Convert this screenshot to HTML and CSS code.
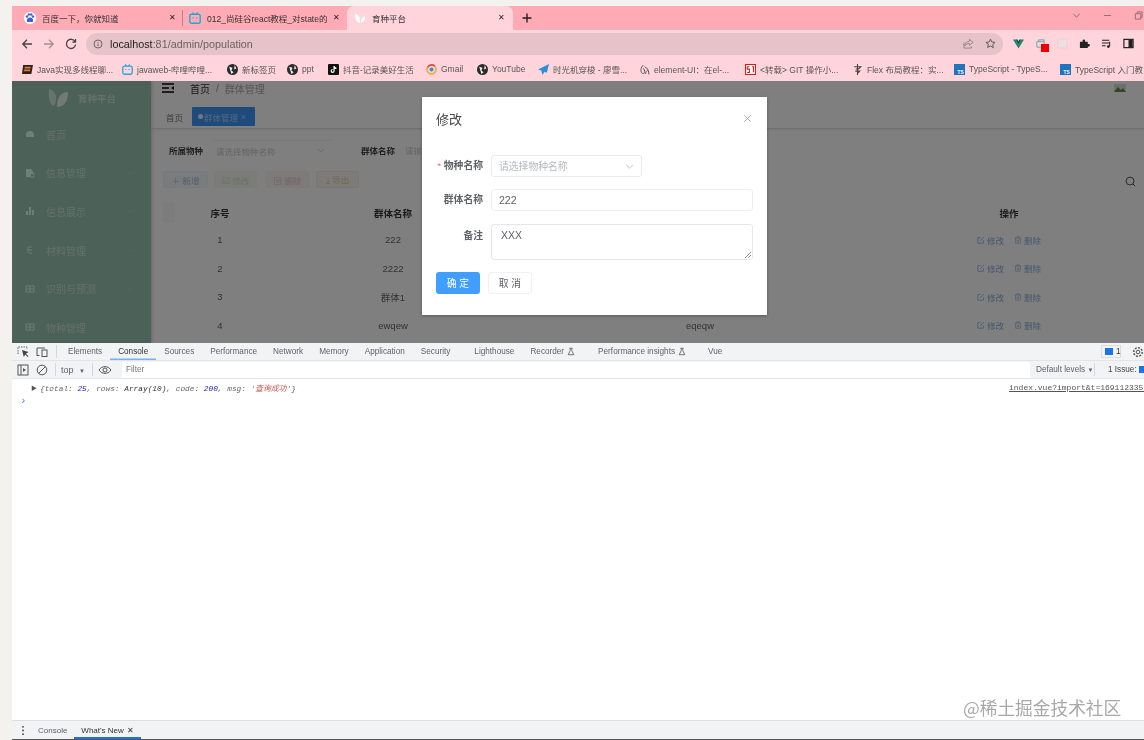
FILE: index.html
```html
<!DOCTYPE html>
<html lang="zh">
<head>
<meta charset="utf-8">
<title>育种平台</title>
<link rel="stylesheet" href="styles.css">
</head>
<body>
<div class="window">
  <div class="tabstrip">
    <div class="tab tab-a">
      <svg class="fav" viewBox="0 0 12 12"><circle cx="6" cy="6" r="6" fill="#fff"/><path d="M6 5.500c-2 0-3.200 1.800-3.200 3.200C2.800 10 4 10.300 6 9.800c2 .5 3.200.2 3.200-1.100C9.200 7.300 8 5.500 6 5.500z" fill="#3a5fd8"/><circle cx="3" cy="4.500" r="1.200" fill="#3a5fd8"/><circle cx="9" cy="4.500" r="1.200" fill="#3a5fd8"/><circle cx="4.800" cy="2.500" r="1.200" fill="#3a5fd8"/><circle cx="7.200" cy="2.500" r="1.200" fill="#3a5fd8"/></svg>
      <span class="tab-title">百度一下，你就知道</span>
      <span class="tab-x">✕</span>
    </div>
    <div class="tab tab-b">
      <svg class="fav" viewBox="0 0 12 12"><rect x=".8" y="2.300" width="10.400" height="9" rx="1.800" fill="none" stroke="#23a6d9" stroke-width="1.400"/><path d="M3.500.5l1.500 1.800M8.500.5L7 2.300M3.500 6h1.500M7 6h1.500" stroke="#23a6d9" stroke-width="1.200"/></svg>
      <span class="tab-title">012_尚硅谷react教程_对state的</span>
      <span class="tab-x">✕</span>
    </div>
    <div class="tab tab-c">
      <svg class="fav" viewBox="0 0 12 12"><path d="M1 2c4 0 5 3 5 9C2 10 1 6 1 2zM7 11c0-4 1-6 4-7 0 4-1 6-4 7z" fill="#fff"/></svg>
      <span class="tab-title">育种平台</span>
      <span class="tab-x">✕</span>
    </div>
    <svg class="newtab" viewBox="0 0 10 10"><path d="M5 .5v9M.5 5h9" stroke="#222" stroke-width="1.400"/></svg>
    <div class="winctl">
      <svg viewBox="0 0 10 10"><path d="M1.500 3l3.500 4 3.500-4" fill="none" stroke="#8a6a70"/></svg>
      <svg viewBox="0 0 10 10"><path d="M1 5h8" stroke="#8a6a70"/></svg>
      <svg viewBox="0 0 10 10"><path d="M1.500 3h6v6h-6zM3.500 3V1h5.500v6H7.500" fill="none" stroke="#8a6a70"/></svg>
    </div>
  </div>

  <div class="toolbar">
    <svg class="nav" viewBox="0 0 12 12"><path d="M11 6H2M6 1.800L1.800 6 6 10.200" fill="none" stroke="#444" stroke-width="1.300"/></svg>
    <svg class="nav" viewBox="0 0 12 12"><path d="M1 6h9M6 1.800L10.200 6 6 10.200" fill="none" stroke="#a58f93" stroke-width="1.300"/></svg>
    <svg class="nav" viewBox="0 0 12 12"><path d="M10 3.500A4.600 4.600 0 1 0 10.600 6.500M10.500 1v3.200H7.300" fill="none" stroke="#444" stroke-width="1.300"/></svg>
    <div class="omnibox">
      <svg class="omni-info" viewBox="0 0 12 12"><circle cx="6" cy="6" r="4.800" fill="none" stroke="#555"/><path d="M6 5.500v3M6 3.500v1" stroke="#555"/></svg>
      <span class="url"><b>localhost</b>:81/admin/population</span>
      <svg class="omni-act" viewBox="0 0 12 12"><path d="M7 1.500l4 3.200-4 3.200V6C4.500 6 3 7 2 8.500 2.300 5.500 4 3.800 7 3.500zM1 5v6h8V9" fill="none" stroke="#8f7a7e" stroke-width=".9"/></svg>
      <svg class="omni-act" viewBox="0 0 12 12"><path d="M6 1.200l1.500 3.200 3.500.4-2.600 2.400.7 3.500L6 8.600l-3.100 1.700.7-3.500L1 4.800l3.500-.4z" fill="none" stroke="#555" stroke-width="1"/></svg>
    </div>
    <div class="ext">
      <svg viewBox="0 0 12 12"><path d="M0 1.500h4l2 3.500 2-3.500h4L6 11.500z" fill="#1d8a6a"/><path d="M3.500 1.500h1.500L6 3.500l1-2h1.500L6 6.500z" fill="#25475f"/></svg>
      <span class="ext-badge-wrap"><svg viewBox="0 0 12 12"><path d="M2 4h8v6H2zM4 4V2h6v2" fill="none" stroke="#5aa8b0"/></svg><i class="ext-badge"></i></span>
      <svg viewBox="0 0 12 12"><rect x="1" y="1" width="10" height="10" rx="1" fill="#f0dfe2" stroke="#e7d0d4"/></svg>
      <svg viewBox="0 0 12 12"><path d="M1 4h3V2.800a1.300 1.300 0 0 1 2.600 0V4h3v2.600h1a1.300 1.300 0 0 1 0 2.600h-1V11H1z" fill="#222"/></svg>
      <svg viewBox="0 0 12 12"><path d="M1 2.500h8M1 5.500h8M1 8.500h4M9.500 4v5" fill="none" stroke="#222" stroke-width="1.100"/><circle cx="8" cy="9.300" r="1.500" fill="#222"/></svg>
      <svg viewBox="0 0 12 12"><rect x="1" y="1.500" width="10" height="9" fill="none" stroke="#222" stroke-width="1.300"/><rect x="6" y="2" width="4.500" height="8" fill="#222"/></svg>
    </div>
  </div>

  <div class="bookmarks">
    <span class="bm bm1"><svg viewBox="0 0 10 10"><path d="M1 1h9L8.500 9H0z" fill="#2b2320"/><path d="M2.500 2.500h5.500l-.3 1.500H2.200zM2 5h5.500l-.3 1.500H1.700z" fill="#e8792b"/></svg><span>Java实现多线程聊...</span></span>
    <span class="bm bm2"><svg viewBox="0 0 10 10"><rect x=".7" y="2" width="8.600" height="7.300" rx="1.500" fill="none" stroke="#23a6d9" stroke-width="1.200"/><path d="M3 .3l1.200 1.700M7 .3L5.800 2M3 5h1M6 5h1" stroke="#23a6d9"/></svg><span>javaweb-哔哩哔哩...</span></span>
    <span class="bm bm3"><svg class="globe" viewBox="0 0 10 10"><circle cx="5" cy="5" r="5" fill="#2a2a2a"/><path d="M2 2.500l3 1-1 2.500 2 1.500-2 1.500M7 1l1.500 3L6.500 5z" fill="#eee"/></svg><span>新标签页</span></span>
    <span class="bm bm4"><svg class="globe" viewBox="0 0 10 10"><circle cx="5" cy="5" r="5" fill="#2a2a2a"/><path d="M2 2.500l3 1-1 2.500 2 1.500-2 1.500M7 1l1.500 3L6.500 5z" fill="#eee"/></svg><span>ppt</span></span>
    <span class="bm bm5"><svg viewBox="0 0 10 10"><rect width="10" height="10" rx="1" fill="#111"/><path d="M5.500 1.800v4.500a1.300 1.300 0 1 1-1.300-1.300M5.500 2c.2 1.200 1 1.800 2.200 1.900" fill="none" stroke="#fff" stroke-width="1.100"/></svg><span>抖音-记录美好生活</span></span>
    <span class="bm bm6"><svg viewBox="0 0 10 10"><circle cx="5" cy="5" r="4" fill="none" stroke="#e8b23a" stroke-width="1.600"/><path d="M1.500 3A4 4 0 0 1 8 2" fill="none" stroke="#d9534a" stroke-width="1.600"/><circle cx="5" cy="5" r="1.800" fill="#3a8ad8"/></svg><span>Gmail</span></span>
    <span class="bm bm7"><svg class="globe" viewBox="0 0 10 10"><circle cx="5" cy="5" r="5" fill="#2a2a2a"/><path d="M2 2.500l3 1-1 2.500 2 1.500-2 1.500M7 1l1.500 3L6.500 5z" fill="#eee"/></svg><span>YouTube</span></span>
    <span class="bm bm8"><svg viewBox="0 0 10 10"><path d="M10 0L0 5l3 1 1 4 2-3 2 1z" fill="#2c8fd8"/></svg><span>时光机穿梭 - 廖雪...</span></span>
    <span class="bm bm9"><svg viewBox="0 0 10 10"><path d="M4 1C1.500 3 1 7 3 8.500S6 6 4 4M5 2.500c3 1 4 4 4 7M6 9c0-2 1-3 2-3.500" fill="none" stroke="#555" stroke-width=".9"/></svg><span>element-UI：在el-...</span></span>
    <span class="bm bm10"><svg viewBox="0 0 10 10"><rect x=".5" y=".5" width="9" height="9" fill="#fff" stroke="#c22"/><path d="M2 2.500h2M2 2.500v2.200h2v3H2M6.500 2.500h1.200v5" fill="none" stroke="#c22"/></svg><span>&lt;转载&gt; GIT 操作小...</span></span>
    <span class="bm bm11"><svg viewBox="0 0 10 10"><path d="M5 0v10M2 2.500h6l-2 2H3.500M3 6.500h4L5 8.500" fill="none" stroke="#444"/></svg><span>Flex 布局教程：实...</span></span>
    <span class="bm bm12"><svg viewBox="0 0 11 11"><rect width="11" height="11" fill="#1f74c0"/><text x="3.500" y="10" class="ts">TS</text></svg><span>TypeScript - TypeS...</span></span>
    <span class="bm bm13"><svg viewBox="0 0 11 11"><rect width="11" height="11" fill="#1f74c0"/><text x="3.500" y="10" class="ts">TS</text></svg><span>TypeScript 入门教</span></span>
  </div>

  <div class="page">
    <aside class="sidebar">
      <div class="logo">
        <svg viewBox="0 0 22 22"><path d="M2 2c5 1 7 4 7 10 0 3-1 6-3 7-3-2-5-8-4-17z" fill="#cfe8da"/><path d="M21 5c-7 0-11 5-11 15 7 0 11-6 11-15z" fill="#e6f3ec"/></svg>
        <span>育种平台</span>
      </div>
      <nav class="menu">
        <div class="mi"><svg viewBox="0 0 10 10"><path d="M1 6a4 4 0 0 1 8 0v2H1z" fill="#e0fff0"/></svg><span>首页</span></div>
        <div class="mi"><svg viewBox="0 0 10 10"><path d="M1 1h5l2 2v2H5v4H1z" fill="#e0fff0"/><rect x="5.500" y="5.500" width="3.500" height="3.500" fill="none" stroke="#e0fff0"/></svg><span>信息管理</span><svg class="chev" viewBox="0 0 10 6"><path d="M1 1l4 4 4-4" fill="none" stroke="#c8ead8" stroke-opacity=".4"/></svg></div>
        <div class="mi"><svg viewBox="0 0 10 10"><path d="M1 5h2v4H1zM4 1h2v8H4zM7 4h2v5H7z" fill="#e0fff0"/></svg><span>信息展示</span><svg class="chev" viewBox="0 0 10 6"><path d="M1 1l4 4 4-4" fill="none" stroke="#c8ead8" stroke-opacity=".4"/></svg></div>
        <div class="mi"><svg viewBox="0 0 10 10"><path d="M3 2h4M3 5h4M4 8h3M3 2v6" fill="none" stroke="#e0fff0" stroke-width=".9"/></svg><span>材料管理</span><svg class="chev" viewBox="0 0 10 6"><path d="M1 1l4 4 4-4" fill="none" stroke="#c8ead8" stroke-opacity=".4"/></svg></div>
        <div class="mi"><svg viewBox="0 0 10 10"><path d="M1 2h8v6H1zM1 5h8M5 2v6" fill="none" stroke="#e0fff0" stroke-width=".9"/></svg><span>识别与预测</span><svg class="chev" viewBox="0 0 10 6"><path d="M1 1l4 4 4-4" fill="none" stroke="#c8ead8" stroke-opacity=".4"/></svg></div>
        <div class="mi"><svg viewBox="0 0 10 10"><path d="M1 2h8v6H1zM1 5h8M5 2v6" fill="none" stroke="#e0fff0" stroke-width=".9"/></svg><span>物种管理</span></div>
      </nav>
    </aside>

    <main class="main">
      <div class="navbar">
        <svg class="hamb" viewBox="0 0 12 10"><path d="M0 1h12M0 9h12M0 5h7" stroke="#000" stroke-width="1.300"/><path d="M12 3v4L9 5z" fill="#000"/></svg>
        <span class="crumb">首页</span><span class="crumb-sep">/</span><span class="crumb-cur">群体管理</span>
        <svg class="avatar" viewBox="0 0 12 8"><path d="M0 0h12v8H0z" fill="#ddd"/><path d="M0 8l4-5 3 3 2-2 3 4z" fill="#5c8f3c"/></svg>
      </div>
      <div class="tagsbar">
        <span class="tag">首页</span>
        <span class="tag tag-on"><i class="dot"></i>群体管理 <span class="tag-x">×</span></span>
      </div>
      <div class="content">
        <div class="searchrow">
          <label class="s-label">所属物种</label>
          <div class="s-select"><span>请选择物种名称</span><svg viewBox="0 0 10 6"><path d="M1 1l4 4 4-4" fill="none" stroke="#ccc"/></svg></div>
          <label class="s-label s-label2">群体名称</label>
          <div class="s-input">请输入群体名称</div>
        </div>
        <div class="btnrow">
          <span class="pb pb-blue">＋ 新增</span>
          <span class="pb pb-green">☑ 修改</span>
          <span class="pb pb-red">⊠ 删除</span>
          <span class="pb pb-org">⤓ 导出</span>
          <svg class="searchicon" viewBox="0 0 12 12"><circle cx="5.500" cy="5.500" r="4.300" fill="none" stroke="#333" stroke-width=".9"/><path d="M8.700 8.700L11 11" stroke="#333" stroke-width=".9"/></svg>
        </div>
        <div class="table">
          <div class="tr th"><span class="chk"></span><span>序号</span><span>群体名称</span><span>备注</span><span>操作</span></div>
          <div class="tr"><span></span><span>1</span><span>222</span><span>XXX</span><span class="ops"><a><svg viewBox="0 0 10 10"><path d="M8 5.500V9H1V2h3.500M4 6l4.500-4.500" fill="none" stroke="#8ab0dc"/></svg>修改</a><a><svg viewBox="0 0 10 10"><path d="M1 2.500h8M3.500 2.500V1h3v1.500M2 2.500V9h6V2.500M4.200 4.500v3M5.800 4.500v3" fill="none" stroke="#8ab0dc" stroke-width=".8"/></svg>删除</a></span></div>
          <div class="tr"><span></span><span>2</span><span>2222</span><span></span><span class="ops"><a><svg viewBox="0 0 10 10"><path d="M8 5.500V9H1V2h3.500M4 6l4.500-4.500" fill="none" stroke="#8ab0dc"/></svg>修改</a><a><svg viewBox="0 0 10 10"><path d="M1 2.500h8M3.500 2.500V1h3v1.500M2 2.500V9h6V2.500M4.200 4.500v3M5.800 4.500v3" fill="none" stroke="#8ab0dc" stroke-width=".8"/></svg>删除</a></span></div>
          <div class="tr"><span></span><span>3</span><span>群体1</span><span></span><span class="ops"><a><svg viewBox="0 0 10 10"><path d="M8 5.500V9H1V2h3.500M4 6l4.500-4.500" fill="none" stroke="#8ab0dc"/></svg>修改</a><a><svg viewBox="0 0 10 10"><path d="M1 2.500h8M3.500 2.500V1h3v1.500M2 2.500V9h6V2.500M4.200 4.500v3M5.800 4.500v3" fill="none" stroke="#8ab0dc" stroke-width=".8"/></svg>删除</a></span></div>
          <div class="tr"><span></span><span>4</span><span>ewqew</span><span>eqeqw</span><span class="ops"><a><svg viewBox="0 0 10 10"><path d="M8 5.500V9H1V2h3.500M4 6l4.500-4.500" fill="none" stroke="#8ab0dc"/></svg>修改</a><a><svg viewBox="0 0 10 10"><path d="M1 2.500h8M3.500 2.500V1h3v1.500M2 2.500V9h6V2.500M4.200 4.500v3M5.800 4.500v3" fill="none" stroke="#8ab0dc" stroke-width=".8"/></svg>删除</a></span></div>
        </div>
      </div>
    </main>

    <div class="overlay"></div>

    <div class="modal">
      <div class="m-head"><span class="m-title">修改</span><svg class="m-close" viewBox="0 0 10 10"><path d="M1.500 1.500l7 7M8.500 1.500l-7 7" stroke="#9a9a9a" stroke-width=".9"/></svg></div>
      <div class="m-row">
        <label class="m-label"><i class="req">*</i> 物种名称</label>
        <div class="m-select"><span>请选择物种名称</span><svg viewBox="0 0 10 6"><path d="M1 1l4 4 4-4" fill="none" stroke="#b5b5b5"/></svg></div>
      </div>
      <div class="m-row">
        <label class="m-label">群体名称</label>
        <div class="m-input">222</div>
      </div>
      <div class="m-row">
        <label class="m-label m-label-top">备注</label>
        <div class="m-area">XXX<svg class="grip" viewBox="0 0 6 6"><path d="M0 6l6-6M3 6l3-3" stroke="#777" stroke-width=".8"/></svg></div>
      </div>
      <div class="m-foot">
        <span class="m-btn m-ok">确 定</span>
        <span class="m-btn m-cancel">取 消</span>
      </div>
    </div>
  </div>

  <div class="devtools">
    <div class="dt-tabs">
      <svg class="dt-ic" viewBox="0 0 12 12"><path d="M1 8V1h9v2" fill="none" stroke="#666" stroke-dasharray="1.500 1"/><path d="M5 4l1.800 7 1.400-2.600 2.600 2.600.7-.7-2.600-2.600L11.500 6z" fill="#444"/></svg>
      <svg class="dt-ic" viewBox="0 0 12 12"><path d="M1 9V2h8M3.500 9.500h-3" fill="none" stroke="#555"/><rect x="6" y="4" width="5" height="6.500" fill="none" stroke="#555"/></svg>
      <i class="dt-sep"></i>
      <span class="dt-tab">Elements</span>
      <span class="dt-tab dt-on">Console</span>
      <span class="dt-tab">Sources</span>
      <span class="dt-tab">Performance</span>
      <span class="dt-tab">Network</span>
      <span class="dt-tab">Memory</span>
      <span class="dt-tab">Application</span>
      <span class="dt-tab">Security</span>
      <span class="dt-tab dt-wide">Lighthouse</span>
      <span class="dt-tab">Recorder <svg class="flask" viewBox="0 0 10 10"><path d="M3 1h4M4 1v3L1.500 9h7L6 4V1" fill="none" stroke="#555"/></svg></span>
      <span class="dt-tab dt-wide2">Performance insights <svg class="flask" viewBox="0 0 10 10"><path d="M3 1h4M4 1v3L1.500 9h7L6 4V1" fill="none" stroke="#555"/></svg></span>
      <span class="dt-tab dt-vue">Vue</span>
      <span class="dt-right">
        <span class="issue-badge"><i class="msg"></i>1</span>
        <svg class="gear" viewBox="0 0 12 12"><circle cx="6" cy="6" r="1.800" fill="none" stroke="#555"/><circle cx="6" cy="6" r="4.300" fill="none" stroke="#555" stroke-width="1.500" stroke-dasharray="2 1.300"/></svg>
      </span>
    </div>
    <div class="dt-bar">
      <svg class="dt-ic" viewBox="0 0 12 12"><rect x="1" y="1" width="10" height="10" fill="none" stroke="#555"/><path d="M4 1v10" stroke="#555"/><path d="M6 4l3 2-3 2z" fill="#555"/></svg>
      <svg class="dt-ic" viewBox="0 0 12 12"><circle cx="6" cy="6" r="4.800" fill="none" stroke="#555"/><path d="M2.700 9.300l6.600-6.600" stroke="#555"/></svg>
      <i class="dt-sep"></i>
      <span class="dt-top">top <small>▼</small></span>
      <i class="dt-sep"></i>
      <svg class="dt-eye" viewBox="0 0 14 10"><path d="M1 5c3-4.500 9-4.500 12 0-3 4.500-9 4.500-12 0z" fill="none" stroke="#555"/><circle cx="7" cy="5" r="2" fill="none" stroke="#555"/></svg>
      <div class="filter">Filter</div>
      <span class="levels">Default levels <small>▼</small></span>
      <i class="dt-sep"></i>
      <span class="issues">1 Issue: <i class="msg"></i></span>
    </div>
    <div class="console">
      <div class="log">
        <span class="caret">▶</span>
        <span class="obj">{total: <em class="n">25</em>, rows: <em class="k">Array(10)</em>, code: <em class="n">200</em>, msg: <em class="s">'查询成功'</em>}</span>
        <a class="src">index.vue?import&amp;t=16911233532</a>
      </div>
      <div class="prompt">›</div>
    </div>
    <div class="watermark">@稀土掘金技术社区</div>
    <div class="drawer">
      <svg class="dots" viewBox="0 0 4 12"><circle cx="2" cy="2" r="1" fill="#444"/><circle cx="2" cy="6" r="1" fill="#444"/><circle cx="2" cy="10" r="1" fill="#444"/></svg>
      <span class="dr-tab">Console</span>
      <span class="dr-tab dr-on">What's New <b>✕</b></span>
    </div>
  </div>
</div>
</body>
</html>
```

FILE: styles.css
```css
* { box-sizing: border-box; }
html, body { margin: 0; height: 100%; overflow: hidden; }
body {
  background: #f3f2ee;
  font-family: "Liberation Sans", "Noto Sans CJK SC", sans-serif;
  padding: 6px 0 0 12px;
  height: 740px;
}
svg { display: block; flex: none; }
i { font-style: normal; }

.window {
  height: 734px;
  display: flex;
  flex-direction: column;
  overflow: hidden;
  filter: blur(.55px);
}

/* tab strip */
.tabstrip { height: 24px; flex: none; background: #ffabb6; display: flex; align-items: stretch; font-size: 8.500px; color: #333; }
.tab { display: flex; align-items: center; position: relative; }
.tab-title { white-space: nowrap; overflow: hidden; }
.tab-x { font-size: 8px; color: #222; position: absolute; top: 7px; }
.fav { width: 12px; height: 12px; margin-right: 6px; }
.tab-a { width: 171px; padding-left: 12px; border-right: 1px solid #c47d88; margin: 4px 0; }
.tab-a .tab-x { left: 157px; top: 3px; }
.tab-b { width: 164px; padding-left: 6px; }
.tab-b .tab-title { width: 124px; }
.tab-b .tab-x { left: 150px; }
.tab-c { width: 166px; padding-left: 7px; background: #ffd5db; border-radius: 7px 7px 0 0; }
.tab-c .tab-x { left: 151px; }
.newtab { width: 10px; height: 10px; margin: 7px 0 0 9px; }
.winctl { margin-left: auto; display: flex; gap: 22px; padding: 5px 0 0 0; width: 72px; overflow: hidden; }
.winctl svg { width: 9px; height: 9px; }

/* toolbar */
.toolbar { height: 27px; flex: none; background: #ffd5db; display: flex; align-items: center; padding-left: 9px; }
.nav { width: 12px; height: 12px; margin-right: 10px; }
.omnibox { width: 917px; height: 22px; margin-left: -1px; border-radius: 11px; background: #e6c3c8; display: flex; align-items: center; padding: 0 7px 0 7px; }
.omni-info { width: 10px; height: 10px; margin-right: 7px; }
.url { font-size: 10.800px; color: #6b5f62; white-space: nowrap; }
.url b { font-weight: 400; color: #222; }
.omni-act { width: 11px; height: 11px; margin-left: 11px; }
.url + .omni-act { margin-left: auto; }
.ext { display: flex; align-items: center; gap: 11px; padding-left: 10px; }
.ext > svg, .ext-badge-wrap svg { width: 11px; height: 11px; }
.ext-badge-wrap { position: relative; display: block; }
.ext-badge { position: absolute; left: 6px; top: 6px; width: 8px; height: 8px; background: #e00; }

/* bookmarks */
.bookmarks { height: 24px; flex: none; background: #ffd5db; display: flex; align-items: center; font-size: 8.500px; color: #555; white-space: nowrap; padding-left: 10px; overflow: hidden; }
.bm { display: flex; align-items: center; gap: 4px; flex: none; }
.bm svg { width: 11px; height: 11px; }
.bm span { display: block; }
.bm1 { width: 100px; }
.bm2 { width: 105px; }
.bm3 { width: 60px; }
.bm4 { width: 41px; }
.bm5 { width: 98px; }
.bm6 { width: 51px; }
.bm7 { width: 61px; }
.bm8 { width: 101px; }
.bm9 { width: 106px; }
.bm10 { width: 107px; }
.bm11 { width: 102px; }
.bm12 { width: 106px; }
.ts { font: 700 5px "Liberation Sans", sans-serif; fill: #fff; }

/* page */
.page { height: 262px; flex: none; display: flex; position: relative; background: #fff; overflow: hidden; }
.overlay { position: absolute; inset: 0; background: rgba(0, 0, 0, .5); }
.sidebar { width: 139px; flex: none; background: #98c2ae; color: #c6e2d4; font-size: 10px; box-shadow: 1px 0 3px rgba(0,0,0,.2); }
.logo { height: 34px; display: flex; align-items: center; padding-left: 35px; gap: 9px; font-weight: 700; font-size: 9.500px; }
.logo svg { width: 22px; height: 22px; }
.menu { display: flex; flex-direction: column; }
.mi { height: 38.600px; display: flex; align-items: center; padding-left: 13px; gap: 11px; position: relative; }
.mi svg { width: 10px; height: 10px; }
.mi .chev { position: absolute; left: 114px; width: 9px; height: 6px; }

.main { flex: 1; min-width: 0; display: flex; flex-direction: column; color: #333; }
.navbar { height: 14px; flex: none; display: flex; align-items: center; padding-left: 11px; font-size: 10px; }
.hamb { width: 12px; height: 10px; margin-right: 16px; }
.crumb { color: #333; }
.crumb-sep { margin: 0 6px; color: #999; }
.crumb-cur { color: #aaa; }
.avatar { width: 12px; height: 8px; margin-left: auto; margin-right: 18px; }
.tagsbar { height: 34px; flex: none; display: flex; align-items: flex-end; padding: 0 0 2px 15px; gap: 9px; border-bottom: 1px solid #dcdcdc; box-shadow: 0 1px 2px rgba(0,0,0,.08); font-size: 8.500px; }
.tag { height: 19px; display: flex; align-items: center; color: #777; }
.tag-on { width: 63px; padding-left: 6px; background: #3f97f8; color: #a8d0fa; border-radius: 1px; white-space: nowrap; }
.dot { width: 5px; height: 5px; border-radius: 50%; background: #e0eeff; margin-right: 1px; }
.tag-x { margin-left: 3px; }

.content { padding: 11px 5px 0 12px; }
.searchrow { height: 20px; display: flex; align-items: center; font-size: 8.500px; }
.s-label { font-weight: 700; color: #444; margin-left: 6px; width: 44px; flex: none; white-space: nowrap; }
.s-select { width: 119px; height: 20px; flex: none; display: flex; align-items: center; justify-content: space-between; padding: 0 7px 0 3px; color: #c8c8c8; border-top: 1px solid #f2f2f2; }
.s-select svg { width: 8px; height: 5px; }
.s-label2 { margin-left: 29px; }
.s-input { color: #c8c8c8; white-space: nowrap; }
.btnrow { margin-top: 11px; height: 17px; display: flex; align-items: center; gap: 6px; font-size: 8.500px; position: relative; }
.pb { width: 45px; height: 17px; display: flex; align-items: center; justify-content: center; border-radius: 2px; flex: none; }
.pb-blue { background: #f4f7fb; color: #a8bce0; border: 1px solid #eef2f8; }
.pb-green { background: #f6f9f3; color: #d0e2c4; width: 43px; }
.pb-red { background: #fbf5f5; color: #eec8c8; margin-left: 2px; }
.pb-org { background: #faf7f2; color: #e6cfa8; border: 1px solid #f4efe6; width: 43px; }
.searchicon { width: 11px; height: 11px; position: absolute; right: 3px; top: 5px; }

.table { margin-top: 14px; }
.tr { display: grid; grid-template-columns: 12px 90px 256px 358px 260px; height: 28.500px; align-items: center; text-align: center; font-size: 9.500px; color: #666; }
.th { height: 21px; margin-bottom: 2.500px; font-weight: 700; color: #333; font-size: 9.500px; }
.th .chk { height: 21px; background: #f9f9f9; }
.ops { display: flex; justify-content: center; gap: 10px; color: #8ab0dc; font-size: 8.500px; }
.ops a { display: flex; align-items: center; gap: 2px; }
.ops svg { width: 8px; height: 8px; }

/* modal */
.modal { position: absolute; left: 410px; top: 16px; width: 345px; height: 218px; background: #fff; color: #606266; box-shadow: 0 1px 3px rgba(0,0,0,.3); padding: 0 14px; }
.m-head { height: 42px; display: flex; align-items: center; justify-content: space-between; padding-right: 1px; }
.m-title { font-size: 13px; color: #444; }
.m-close { width: 9px; height: 9px; }
.m-row { display: flex; align-items: center; margin-bottom: 12px; font-size: 9.800px; }
.m-row:nth-child(2) { margin-top: 16px; }
.m-row:nth-child(3) { margin-bottom: 13px; }
.m-label { width: 47px; flex: none; text-align: right; font-weight: 700; margin-right: 8px; white-space: nowrap; position: relative; top: -1px; }
.req { color: #f56c6c; font-weight: 400; }
.m-select { width: 151px; height: 22px; border: 1px solid #e8ebf0; border-radius: 3px; display: flex; align-items: center; justify-content: space-between; padding: 0 7px; color: #b5b8be; }
.m-select svg { width: 9px; height: 5px; }
.m-input { width: 262px; height: 22px; border: 1px solid #eceef2; border-radius: 3px; display: flex; align-items: center; padding: 0 7px; color: #606266; font-size: 10.500px; }
.m-area { width: 262px; height: 36px; border: 1px solid #e4e7ec; border-radius: 3px; padding: 4px 9px; color: #606266; position: relative; line-height: 12px; font-size: 10.500px; }
.grip { position: absolute; right: 1px; bottom: 1px; width: 6px; height: 6px; }
.m-label-top { align-self: flex-start; padding-top: 5px; }
.m-foot { display: flex; gap: 8px; font-size: 9.800px; }
.m-btn { width: 44px; height: 22px; border-radius: 3px; display: flex; align-items: center; justify-content: center; }
.m-ok { background: #409eff; color: #fff; }
.m-cancel { border: 1px solid #eff1f4; color: #606266; }

/* devtools */
.devtools { flex: 1; display: flex; flex-direction: column; background: #fff; position: relative; min-height: 0; border-bottom: 1px solid #555; }
.dt-tabs { height: 18px; flex: none; background: #f1f3f4; display: flex; align-items: center; padding-left: 5px; font-size: 8.200px; color: #5f6368; white-space: nowrap; border-bottom: 1px solid #e4e4e4; }
.dt-ic { width: 12px; height: 12px; margin-right: 7px; }
.dt-sep { width: 1px; height: 13px; background: #d4d6d8; margin: 0 4px 0 1px; flex: none; }
.dt-tab { height: 17px; display: flex; align-items: center; gap: 3px; margin: 0 8px; }
.dt-tabs .dt-sep + .dt-tab { margin-left: 7px; }
.dt-on { color: #333; margin: 0; padding: 0 8px; box-shadow: inset 0 -1.500px 0 #7fb0ee; }
.dt-wide { margin-left: 16px; }
.dt-wide2 { margin-left: 15px; }
.dt-vue { margin-left: 14px; }
.flask { width: 8px; height: 9px; }
.dt-right { margin-left: auto; display: flex; align-items: center; gap: 11px; }
.issue-badge { display: flex; align-items: center; gap: 3px; border: 1px solid #dcdcdc; padding: 0 4px 0 3px; height: 13px; width: 20px; color: #333; }
.msg { width: 8px; height: 7px; background: #1a73e8; display: inline-block; flex: none; }
.gear { width: 12px; height: 12px; }

.dt-bar { height: 18px; flex: none; display: flex; align-items: center; padding-left: 5px; font-size: 8.200px; color: #5f6368; background: #f1f3f4; border-bottom: 1px solid #e3e5e7; white-space: nowrap; overflow: hidden; }
.dt-bar .dt-sep { margin: 0 5px 0 0; }
.dt-top { width: 31px; flex: none; font-size: 9px; }
.dt-top small { margin-left: 3px; }
.dt-top small, .levels small { font-size: 6px; }
.dt-eye { width: 14px; height: 10px; margin: 0 10px 0 0; }
.filter { width: 908px; height: 16px; flex: none; background: #fff; padding: 2px 4px; line-height: 12px; color: #777; }
.levels { width: 64px; padding-left: 6px; flex: none; }
.issues { display: flex; align-items: center; gap: 2px; margin-left: 8px; color: #444; }

.console { flex: 1; min-height: 0; font: italic 7.800px "Liberation Mono", "Noto Sans CJK SC", monospace; color: #666; }
.log { height: 15px; margin-top: 1px; display: flex; align-items: center; position: relative; padding-left: 19px; white-space: nowrap; }
.caret { font-style: normal; font-size: 6px; width: 9px; color: #555; }
.obj em { font-style: italic; }
.n { color: #1a1aa6; }
.k { color: #333; }
.s { color: #d0524e; }
.src { position: absolute; left: 997px; font-style: normal; font-size: 8px; text-decoration: underline; color: #555; }
.prompt { font-style: normal; font-size: 11px; color: #4b8fe0; padding-left: 8px; line-height: 13px; }

.watermark { position: absolute; left: 951px; top: 354px; font-size: 17.700px; color: #a8a8a8; white-space: nowrap; font-family: "Noto Sans CJK SC", sans-serif; line-height: 20px; }
.drawer { height: 19px; flex: none; background: #f1f3f4; border-top: 1px solid #dcdee0; display: flex; align-items: center; padding-left: 9px; font-size: 8px; color: #5f6368; }
.dots { width: 4px; height: 11px; margin-right: 13px; }
.dr-tab { height: 17px; display: flex; align-items: center; }
.dr-on { margin-left: 7px; padding: 0 7px; color: #333; gap: 3px; box-shadow: inset 0 -2px 0 #1a73e8; }
.dr-on b { font-weight: 400; font-size: 8px; }
```
